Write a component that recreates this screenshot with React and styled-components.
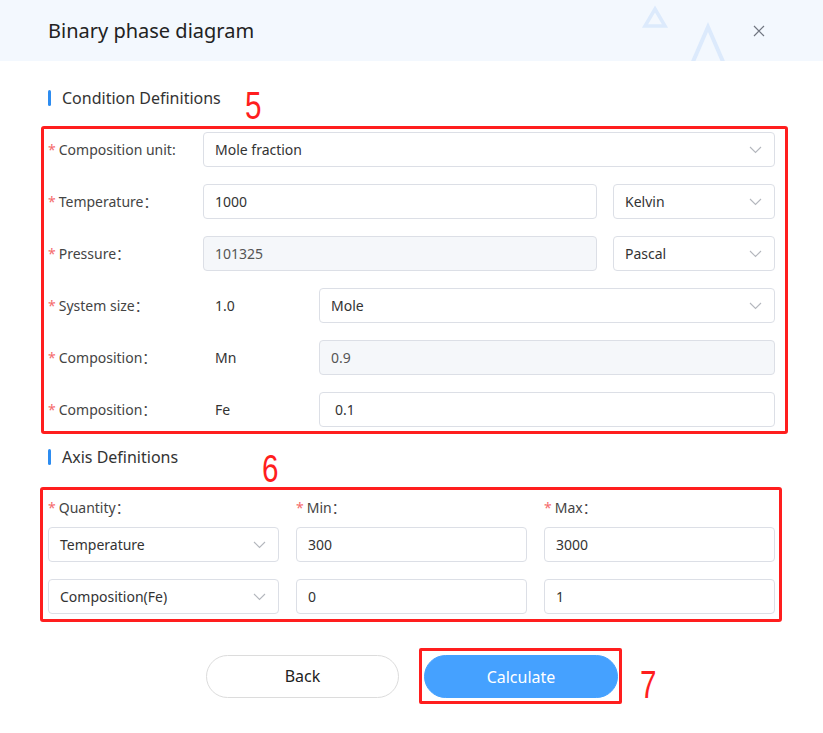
import React from 'react';
import styled, { createGlobalStyle } from 'styled-components';

const GlobalStyle = createGlobalStyle`
  html, body {
    margin: 0;
    padding: 0;
    background: #ffffff;
  }
  * {
    box-sizing: border-box;
  }
`;

const Page = styled.div`
  width: 823px;
  min-height: 733px;
  background: #ffffff;
  font-family: "Noto Sans", "Open Sans", "Noto Sans CJK SC", sans-serif;
  color: #333;
`;

const Header = styled.header`
  position: relative;
  height: 61px;
  background: #f3f8fe;
  display: flex;
  align-items: center;
  justify-content: space-between;
  padding: 0 57px 0 48px;
  overflow: hidden;
`;

const Title = styled.h1`
  margin: 0;
  font-size: 20px;
  font-weight: 400;
  color: #222;
`;

const Decor = styled.svg`
  position: absolute;
  left: 640px;
  top: 0;
  pointer-events: none;
`;

const CloseButton = styled.button`
  position: relative;
  width: 14px;
  height: 14px;
  padding: 0;
  border: none;
  background: transparent;
  display: flex;
  align-items: center;
  justify-content: center;
  cursor: pointer;
`;

const Body = styled.div`
  padding: 26px 48px 0 48px;
`;

const SectionTitle = styled.div`
  position: relative;
  display: flex;
  align-items: center;
  gap: 11px;
  height: 22px;
  margin-top: ${p => p.$top || 0}px;
  font-size: 16px;
  color: #333;

  &::before {
    content: '';
    width: 3px;
    height: 16px;
    border-radius: 2px;
    background: #2d8cf0;
  }
`;

const Mark = styled.span`
  position: absolute;
  left: ${p => p.$left}px;
  top: ${p => p.$top}px;
  font-family: "Liberation Sans", Arial, sans-serif;
  font-size: 38px;
  line-height: 1;
  color: #ff1e1e;
  transform: scaleX(0.78);
  transform-origin: left top;
`;

const Highlight = styled.div`
  border: 3px solid #ff1e1e;
  border-radius: 3px;
  margin: ${p => p.$margin};
  padding: ${p => p.$padding};
`;

const Rows = styled.div`
  display: flex;
  flex-direction: column;
  gap: 17px;
`;

const FormRow = styled.div`
  display: grid;
  grid-template-columns: 155px 1fr;
  align-items: center;
  height: 35px;
`;

const Label = styled.label`
  font-size: 14px;
  color: #444;
  white-space: nowrap;
  line-height: 20px;

  &::before {
    content: '*';
    color: #f56c6c;
    margin-right: 3px;
  }
`;

const Controls = styled.div`
  display: flex;
  align-items: center;
  gap: ${p => (p.$gap != null ? p.$gap : 16)}px;
  height: 35px;
`;

const Field = styled.div`
  flex: ${p => (p.$width ? `0 0 ${p.$width}px` : '1 1 0')};
  height: 35px;
  display: flex;
  align-items: center;
  justify-content: space-between;
  padding: 0 12px 0 ${p => p.$pad || 11}px;
  border: 1px solid #dcdfe6;
  border-radius: 4px;
  background: ${p => (p.$disabled ? '#f5f7fa' : '#ffffff')};
  font-size: 14px;
  color: ${p => (p.$disabled ? '#555' : '#333')};
  white-space: nowrap;
`;

const StaticValue = styled.div`
  flex: 0 0 116px;
  padding-left: 12px;
  font-size: 14px;
  color: #333;
`;

const AxisGrid = styled.div`
  display: grid;
  grid-template-columns: repeat(3, 1fr);
  grid-auto-rows: auto;
  column-gap: 17px;
  row-gap: 0;

  & > :nth-child(n + 4) {
    margin-top: 9px;
  }
  & > :nth-child(n + 7) {
    margin-top: 17px;
  }
`;

const AxisLabel = styled(Label)`
  display: block;
`;

const Actions = styled.div`
  display: flex;
  align-items: center;
  gap: 20px;
  margin-top: 26px;
  padding-left: 158px;
`;

const PillButton = styled.button`
  width: ${p => p.$width}px;
  height: 43px;
  border-radius: 22px;
  font-family: "Noto Sans", "Open Sans", sans-serif;
  font-size: 16px;
  cursor: pointer;
  border: 1px solid ${p => (p.$primary ? '#45a1ff' : '#dcdcdc')};
  background: ${p => (p.$primary ? '#45a1ff' : '#ffffff')};
  color: ${p => (p.$primary ? '#ffffff' : '#222')};
`;

const ButtonHighlight = styled.div`
  position: relative;
  border: 3px solid #ff1e1e;
  border-radius: 2px;
  padding: 4px 1px 3px 2px;
  display: flex;
`;

const Chevron = () => (
  <svg width="13" height="8" viewBox="0 0 13 8" fill="none">
    <polyline points="1,1 6.5,6.5 12,1" stroke="#b4b7bd" strokeWidth="1.1" />
  </svg>
);

const Select = ({ value, width, pad }) => (
  <Field $width={width} $pad={pad}>
    <span>{value}</span>
    <Chevron />
  </Field>
);

const Input = ({ value, disabled, width, pad }) => (
  <Field $disabled={disabled} $width={width} $pad={pad}>
    <span>{value}</span>
  </Field>
);

export default function App() {
  return (
    <Page>
      <GlobalStyle />
      <Header>
        <Title>Binary phase diagram</Title>
        <Decor width="100" height="61" viewBox="0 0 100 61">
          <polygon points="15,9 25,26 5,26" fill="none" stroke="#dceafc" strokeWidth="3.5" />
          <polygon points="68,27 84,64 52,64" fill="none" stroke="#dceafc" strokeWidth="4" />
        </Decor>
        <CloseButton aria-label="close">
          <svg width="12" height="12" viewBox="0 0 12 12">
            <path d="M1 1 L11 11 M11 1 L1 11" stroke="#707580" strokeWidth="1.2" />
          </svg>
        </CloseButton>
      </Header>

      <Body>
        <SectionTitle>
          Condition Definitions
          <Mark $left={197} $top={0}>5</Mark>
        </SectionTitle>

        <Highlight $margin="17px -13px 0 -7px" $padding="3px 10px 4px 4px">
          <Rows>
            <FormRow>
              <Label>Composition unit:</Label>
              <Controls>
                <Select value="Mole fraction" />
              </Controls>
            </FormRow>
            <FormRow>
              <Label>Temperature：</Label>
              <Controls>
                <Input value="1000" />
                <Select value="Kelvin" width={162} />
              </Controls>
            </FormRow>
            <FormRow>
              <Label>Pressure：</Label>
              <Controls>
                <Input value="101325" disabled />
                <Select value="Pascal" width={162} />
              </Controls>
            </FormRow>
            <FormRow>
              <Label>System size：</Label>
              <Controls $gap={0}>
                <StaticValue>1.0</StaticValue>
                <Select value="Mole" />
              </Controls>
            </FormRow>
            <FormRow>
              <Label>Composition：</Label>
              <Controls $gap={0}>
                <StaticValue>Mn</StaticValue>
                <Input value="0.9" disabled />
              </Controls>
            </FormRow>
            <FormRow>
              <Label>Composition：</Label>
              <Controls $gap={0}>
                <StaticValue>Fe</StaticValue>
                <Input value="0.1" pad={15} />
              </Controls>
            </FormRow>
          </Rows>
        </Highlight>

        <SectionTitle $top={12}>
          Axis Definitions
          <Mark $left={214} $top={4}>6</Mark>
        </SectionTitle>

        <Highlight $margin="19px -7px 0 -8px" $padding="8px 4px 5px 5px">
          <AxisGrid>
            <AxisLabel>Quantity：</AxisLabel>
            <AxisLabel>Min：</AxisLabel>
            <AxisLabel>Max：</AxisLabel>
            <Select value="Temperature" />
            <Input value="300" />
            <Input value="3000" />
            <Select value="Composition(Fe)" />
            <Input value="0" />
            <Input value="1" />
          </AxisGrid>
        </Highlight>

        <Actions>
          <PillButton $width={193}>Back</PillButton>
          <ButtonHighlight>
            <PillButton $primary $width={194}>Calculate</PillButton>
            <Mark $left={218} $top={15}>7</Mark>
          </ButtonHighlight>
        </Actions>
      </Body>
    </Page>
  );
}
